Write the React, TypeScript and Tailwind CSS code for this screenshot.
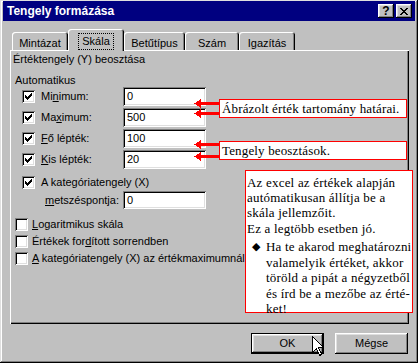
import React from 'react';

const raised =
  'shadow-[inset_-1px_-1px_#000,inset_1px_1px_#fff,inset_-2px_-2px_#808080,inset_2px_2px_#dfdfdf]';
const sunken =
  'shadow-[inset_1px_1px_#808080,inset_-1px_-1px_#fff,inset_2px_2px_#000,inset_-2px_-2px_#dfdfdf]';

function Check({ checked }: { checked?: boolean }) {
  const cols = [5, 6, 7, 6, 5, 4, 3];
  return (
    <span className={`relative block h-[13px] w-[13px] shrink-0 bg-white ${sunken}`}>
      {checked && (
        <svg width="13" height="13" className="absolute left-0 top-0" shapeRendering="crispEdges">
          {cols.map((y, i) => (
            <rect key={i} x={3 + i} y={y} width="1" height="3" fill="#000" />
          ))}
        </svg>
      )}
    </span>
  );
}

function Field({ value, h = 19 }: { value: string; h?: number }) {
  return (
    <div
      className={`flex w-[83px] items-center bg-white pl-[4px] ${sunken}`}
      style={{ height: h }}
    >
      {value}
    </div>
  );
}

function Arrow({ top }: { top: number }) {
  return (
    <svg
      width="28"
      height="9"
      className="absolute left-[194px]"
      style={{ top: top - 4 }}
      shapeRendering="crispEdges"
    >
      <polygon points="0,4.5 7,0 7,9" fill="#ff0000" />
      <rect x="6" y="3" width="22" height="3" fill="#ff0000" />
    </svg>
  );
}

const tabs = [
  { label: 'Mintázat', w: 56 },
  { label: 'Skála', w: 56, active: true },
  { label: 'Betűtípus', w: 61 },
  { label: 'Szám', w: 54 },
  { label: 'Igazítás', w: 56 },
];

export default function App() {
  return (
    <div className="relative h-[363px] w-[418px] overflow-hidden bg-[#c0c0c0] px-[3px] pt-[1px] font-['Liberation_Sans',Arial,sans-serif] text-[11px] leading-[13px] text-black shadow-[inset_-1px_-1px_#000,inset_1px_1px_#dfdfdf,inset_-2px_-2px_#808080,inset_2px_2px_#fff]">
      {/* title bar */}
      <div className="flex h-[20px] items-center bg-[#000080] pl-[4px] pr-[3px]">
        <span className="text-[12px] font-bold text-white">Tengely formázása</span>
        <div className="ml-auto flex gap-[2px]">
          <div className={`flex h-[14px] w-[16px] items-center justify-center bg-[#c0c0c0] text-[12px] font-bold ${raised}`}>
            ?
          </div>
          <div className={`flex h-[14px] w-[16px] items-center justify-center bg-[#c0c0c0] ${raised}`}>
            <svg width="8" height="7" shapeRendering="crispEdges">
              <path d="M0 0h2v1H0zM6 0h2v1H6zM1 1h2v1H1zM5 1h2v1H5zM2 2h4v1H2zM3 3h2v1H3zM2 4h4v1H2zM1 5h2v1H1zM5 5h2v1H5zM0 6h2v1H0zM6 6h2v1H6z" fill="#000" />
            </svg>
          </div>
        </div>
      </div>

      {/* tabs */}
      <div className="ml-[9px] mt-[8px] flex h-[21px] items-end">
        {tabs.map((t) =>
          t.active ? (
            <div
              key={t.label}
              className="relative z-10 -mb-[1px] flex h-[22px] items-start justify-center rounded-t-[3px] bg-[#c0c0c0] pt-[4px] shadow-[inset_1px_1px_#fff,inset_-1px_0_#000,inset_-2px_0_#808080]"
              style={{ width: t.w }}
            >
              <span className="border border-dotted border-black px-[3px] pb-[1px] pt-[1px]">{t.label}</span>
            </div>
          ) : (
            <div
              key={t.label}
              className="flex h-[18px] items-start justify-center rounded-t-[3px] bg-[#c0c0c0] pt-[5px] shadow-[inset_1px_1px_#fff,inset_-1px_0_#000,inset_-2px_0_#808080]"
              style={{ width: t.w }}
            >
              {t.label}
            </div>
          )
        )}
      </div>

      {/* panel */}
      <div className="ml-[7px] h-[274px] w-[399px] pl-[3px] pt-[3px] shadow-[inset_1px_1px_#fff,inset_-1px_-1px_#000,inset_-2px_-2px_#808080]">
        <div className="h-[13px]">Értéktengely (Y) beosztása</div>
        <div className="mt-[8px] h-[13px] pl-[2px]">Automatikus</div>
        <div className="flex flex-col gap-[2px] pl-[9px]">
          {[
            ['Mi', 'n', 'imum:', '0'],
            ['Ma', 'x', 'imum:', '500'],
            ['', 'F', 'ő lépték:', '100'],
            ['', 'K', 'is lépték:', '20'],
          ].map(([a, u, b, v]) => (
            <div key={b + v} className="flex h-[19px] items-center">
              <Check checked />
              <span className="ml-[6px] w-[82px]">
                {a}
                <span className="underline underline-offset-[1px]">{u}</span>
                {b}
              </span>
              <Field value={v} />
            </div>
          ))}
        </div>
        <div className="mt-[5px] flex h-[17px] items-center pl-[9px]">
          <Check checked />
          <span className="ml-[6px]">A kategóriatengely (X)</span>
        </div>
        <div className="flex h-[18px] items-center pl-[32px]">
          <span className="w-[78px]">
            <span className="underline underline-offset-[1px]">m</span>etszéspontja:
          </span>
          <Field value="0" h={18} />
        </div>
        <div className="mt-[7px] pl-[2px]">
          <div className="flex h-[17px] items-center">
            <Check />
            <span className="ml-[4px]">
              <span className="underline underline-offset-[1px]">L</span>ogaritmikus skála
            </span>
          </div>
          <div className="flex h-[17px] items-center">
            <Check />
            <span className="ml-[4px]">
              Értékek for<span className="underline underline-offset-[1px]">d</span>ított sorrendben
            </span>
          </div>
          <div className="flex h-[17px] items-center">
            <Check />
            <span className="ml-[4px]">
              <span className="underline underline-offset-[1px]">A</span> kategóriatengely (X) az értékmaximumnál
            </span>
          </div>
        </div>
      </div>

      {/* buttons */}
      <div className="mt-[9px] flex justify-end gap-[11px] pr-[7px]">
        <div className="h-[21px] w-[73px] border border-black">
          <div className={`flex h-full w-full items-center justify-center bg-[#c0c0c0] ${raised}`}>OK</div>
        </div>
        <div className={`flex h-[21px] w-[73px] items-center justify-center bg-[#c0c0c0] ${raised}`}>Mégse</div>
      </div>

      {/* annotations */}
      <Arrow top={103} />
      <Arrow top={113} />
      <Arrow top={144} />
      <Arrow top={156} />
      <div className="absolute left-[219px] top-[99px] flex h-[19px] w-[188px] items-center whitespace-nowrap border border-[#ff0000] bg-white pl-[2px] font-['Liberation_Serif','Times_New_Roman',serif] text-[13px] tracking-[0.15px]">
        Ábrázolt érték tartomány határai.
      </div>
      <div className="absolute left-[219px] top-[141px] flex h-[19px] w-[188px] items-center whitespace-nowrap border border-[#ff0000] bg-white pl-[2px] font-['Liberation_Serif','Times_New_Roman',serif] text-[13px] tracking-[0.15px]">
        Tengely beosztások.
      </div>
      <div className="absolute left-[245px] top-[170px] h-[143px] w-[168px] whitespace-nowrap border border-[#ff0000] bg-white pl-[1px] pt-[4px] font-['Liberation_Serif','Times_New_Roman',serif] text-[13px] leading-[15px] tracking-[0.2px]">
        <div>
          Az excel az értékek alapján
          <br />
          autómatikusan állítja be a
          <br />
          skála jellemzőit.
        </div>
        <div className="mt-[1px]">Ez a legtöbb esetben jó.</div>
        <div className="mt-[3px] flex">
          <span className="w-[19px] pl-[5px] text-[11px]">◆</span>
          <div className="leading-[15.5px]">
            Ha te akarod meghatározni
            <br />
            valamelyik értéket, akkor
            <br />
            töröld a pipát a négyzetből
            <br />
            és írd be a mezőbe az érté-
            <br />
            ket!
          </div>
        </div>
      </div>

      {/* mouse cursor */}
      <svg width="13" height="21" className="absolute left-[312px] top-[336px]" shapeRendering="crispEdges">
        <polygon
          points="0.5,0.5 0.5,16.5 4.5,12.5 7.5,19.5 9.5,18.5 6.5,11.5 11.5,11.5"
          fill="#fff"
          stroke="#000"
          strokeWidth="1"
        />
      </svg>
    </div>
  );
}
